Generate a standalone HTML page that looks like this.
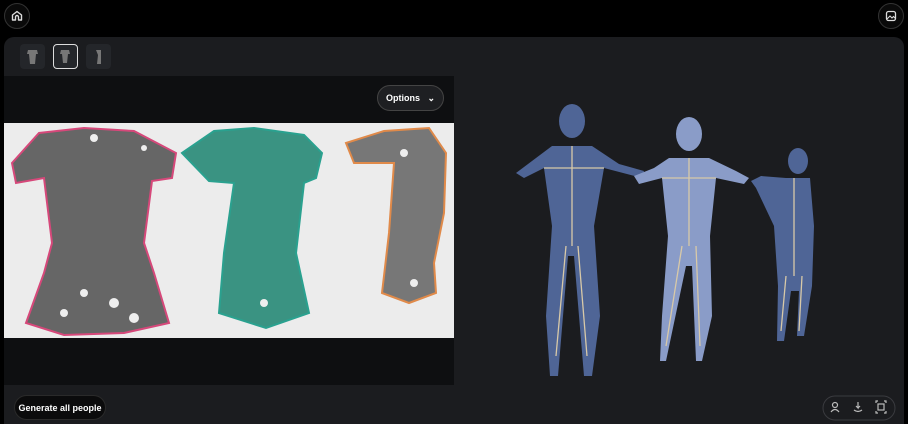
<!DOCTYPE html>
<html><head><style>
html,body{margin:0;width:908px;height:424px;background:#000;overflow:hidden;font-family:"Liberation Sans",sans-serif;position:relative}
.abs{position:absolute}
.circ{width:26px;height:26px;border-radius:50%;border:1px solid #333;background:#0a0a0a;box-sizing:border-box}
.panel{left:4px;top:37px;width:900px;height:387px;background:#1b1c1f;border-radius:10px 10px 0 0}
.thumb{top:44px;width:25px;height:25px;border-radius:4px;background:#24262a;box-sizing:border-box}
.btn{color:#fff;font-size:9px;font-weight:bold;border-radius:14px;box-sizing:border-box;display:flex;align-items:center;justify-content:center}
</style></head><body>
<div class="abs circ" style="left:4px;top:3px"><svg width="24" height="24" viewBox="0 0 24 24"><path d="M7.5 16V11L12 7.5 16.5 11V16H13.5V13A1.5 1.5 0 0 0 10.5 13V16Z" fill="none" stroke="#ddd" stroke-width="1.4" stroke-linejoin="round"/></svg></div>
<div class="abs circ" style="left:878px;top:3px"><svg width="24" height="24" viewBox="0 0 24 24"><rect x="7.5" y="7.5" width="9" height="9" rx="2" fill="none" stroke="#ddd" stroke-width="1.3"/><path d="M8 15l3-3 2 2 1.5-1.5 2 2" fill="none" stroke="#ddd" stroke-width="1.1"/></svg></div>
<div class="abs panel"></div>
<div class="abs thumb" style="left:20px"><svg width="25" height="25"><path d="M8 6h9l1 4-2 0-1 10H10L9 10H7z" fill="#777"/></svg></div>
<div class="abs thumb" style="left:53px;border:1.5px solid #ddd"><svg width="22" height="22"><path d="M7 5h8l1 4-2 0-1 9H9L8 9H6z" fill="#777"/></svg></div>
<div class="abs thumb" style="left:86px"><svg width="25" height="25"><path d="M10 6h5v14h-4l1-9z" fill="#777"/></svg></div>
<div class="abs" style="left:4px;top:76px;width:450px;height:348px;background:#0e0f11"></div>
<div class="abs" style="left:4px;top:385px;width:450px;height:39px;background:#1b1c1f"></div>
<div class="abs btn" style="left:377px;top:85px;width:67px;height:26px;border:1px solid #444;background:#1e1f22">Options&nbsp;&nbsp;&nbsp;⌄</div>
<div class="abs" style="left:4px;top:123px;width:450px;height:215px;background:#ececec">
<svg width="450" height="215">
<path d="M8 40 L35 10 L80 5 L130 8 L172 30 L168 55 L148 58 L140 120 L150 150 L165 200 L120 210 L60 212 L22 200 L40 150 L48 120 L40 55 L12 60Z" fill="#666" stroke="#d6487a" stroke-width="2"/>
<path d="M178 30 L210 8 L250 5 L300 12 L318 30 L312 55 L300 60 L292 130 L305 190 L262 205 L215 190 L220 130 L230 60 L205 58Z" fill="#3a9382" stroke="#2aa18f" stroke-width="2"/>
<path d="M342 20 L380 8 L425 5 L442 30 L440 90 L430 140 L432 170 L405 180 L378 170 L385 110 L390 40 L350 40Z" fill="#777" stroke="#e08a4a" stroke-width="2"/>
<g fill="#eee"><circle cx="80" cy="170" r="4"/><circle cx="110" cy="180" r="5"/><circle cx="60" cy="190" r="4"/><circle cx="130" cy="195" r="5"/><circle cx="90" cy="15" r="4"/><circle cx="140" cy="25" r="3"/><circle cx="260" cy="180" r="4"/><circle cx="410" cy="160" r="4"/><circle cx="400" cy="30" r="4"/></g>
</svg></div>
<div class="abs btn" style="left:14px;top:395px;width:92px;height:25px;background:#0b0b0c;border:1px solid #2a2a2a">Generate all people</div>
<svg class="abs" style="left:454px;top:76px" width="450" height="348">
<g fill="#4f6596">
<ellipse cx="118" cy="45" rx="13" ry="17"/><path d="M98 70 L138 70 L165 88 L190 95 L188 102 L150 92 L140 150 L146 240 L138 300 L130 300 L120 180 L114 180 L104 300 L96 300 L92 240 L98 150 L90 92 L70 102 L62 97 L82 82Z"/>
</g>
<g fill="#8a9cc8">
<ellipse cx="235" cy="58" rx="13" ry="17"/><path d="M215 82 L255 82 L282 95 L295 102 L290 108 L262 102 L256 160 L258 240 L248 285 L242 285 L238 190 L232 190 L212 285 L206 285 L208 240 L214 160 L208 102 L185 108 L180 100 L200 92Z"/>
</g>
<g fill="#4f6596">
<ellipse cx="344" cy="85" rx="10" ry="13"/><path d="M332 102 L356 102 L360 150 L358 210 L350 260 L343 260 L345 215 L337 215 L330 265 L323 265 L324 210 L320 150 L302 112 L297 105 L307 100Z"/>
</g>
<g stroke="#d8c9a8" stroke-width="1.3" fill="none"><path d="M118 70V170M90 92L150 92M112 170L102 280M124 170L133 280M235 82V170M208 102L262 102M228 170L212 270M242 170L246 270M340 102V200M332 200L327 255M348 200L345 255"/></g>
<rect x="369" y="320" width="72" height="24" rx="12" fill="#1b1c1f" stroke="#3a3b3f"/>
<g stroke="#bbb" stroke-width="1.2" fill="none"><circle cx="381" cy="329" r="2.5"/><path d="M377 336q4-5 8 0"/><path d="M404 326v6l-2-2m2 2l2-2M400 334q4 3 8 0"/><rect x="424" y="328" width="6" height="6"/><path d="M422 327v-2h2M430 325h2v2M432 335v2h-2M424 337h-2v-2"/></g>
</svg>
</body></html>
